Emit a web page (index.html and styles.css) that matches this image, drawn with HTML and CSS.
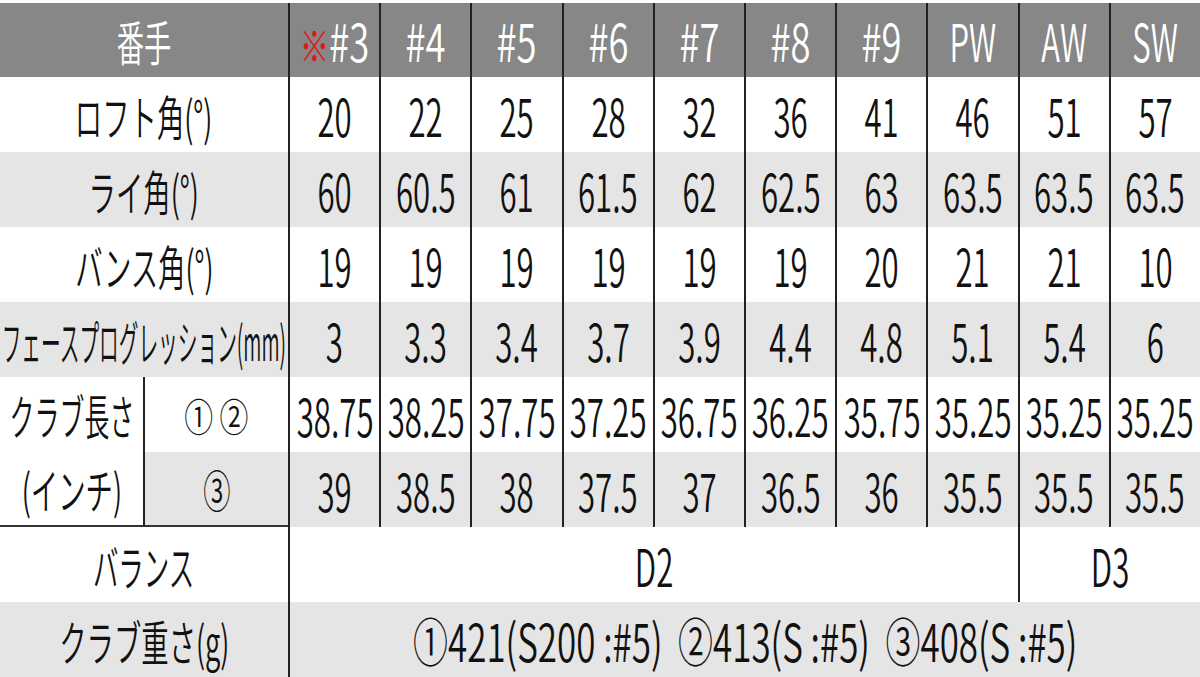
FILE: index.html
```html
<!DOCTYPE html>
<html lang="ja">
<head>
<meta charset="utf-8">
<title>スペック</title>
<link rel="stylesheet" href="styles.css">
</head>
<body>
<div class="spec">
  <div class="c h span2"><span class="t jp">番手</span></div>
  <div class="c h d"><span class="t hn"><span class="mark">※</span>#3</span></div>
  <div class="c h d"><span class="t hn">#4</span></div>
  <div class="c h d"><span class="t hn">#5</span></div>
  <div class="c h d"><span class="t hn">#6</span></div>
  <div class="c h d"><span class="t hn">#7</span></div>
  <div class="c h d"><span class="t hn">#8</span></div>
  <div class="c h d"><span class="t hn">#9</span></div>
  <div class="c h d"><span class="t">PW</span></div>
  <div class="c h d"><span class="t">AW</span></div>
  <div class="c h d"><span class="t">SW</span></div>

  <div class="c w span2"><span class="t jp">ロフト角(°)</span></div>
  <div class="c w d"><span class="t">20</span></div>
  <div class="c w d"><span class="t">22</span></div>
  <div class="c w d"><span class="t">25</span></div>
  <div class="c w d"><span class="t">28</span></div>
  <div class="c w d"><span class="t">32</span></div>
  <div class="c w d"><span class="t">36</span></div>
  <div class="c w d"><span class="t">41</span></div>
  <div class="c w d"><span class="t">46</span></div>
  <div class="c w d"><span class="t">51</span></div>
  <div class="c w d"><span class="t">57</span></div>

  <div class="c g span2"><span class="t jp">ライ角(°)</span></div>
  <div class="c g d"><span class="t">60</span></div>
  <div class="c g d"><span class="t">60.5</span></div>
  <div class="c g d"><span class="t">61</span></div>
  <div class="c g d"><span class="t">61.5</span></div>
  <div class="c g d"><span class="t">62</span></div>
  <div class="c g d"><span class="t">62.5</span></div>
  <div class="c g d"><span class="t">63</span></div>
  <div class="c g d"><span class="t">63.5</span></div>
  <div class="c g d"><span class="t">63.5</span></div>
  <div class="c g d"><span class="t">63.5</span></div>

  <div class="c w span2"><span class="t jp">バンス角(°)</span></div>
  <div class="c w d"><span class="t">19</span></div>
  <div class="c w d"><span class="t">19</span></div>
  <div class="c w d"><span class="t">19</span></div>
  <div class="c w d"><span class="t">19</span></div>
  <div class="c w d"><span class="t">19</span></div>
  <div class="c w d"><span class="t">19</span></div>
  <div class="c w d"><span class="t">20</span></div>
  <div class="c w d"><span class="t">21</span></div>
  <div class="c w d"><span class="t">21</span></div>
  <div class="c w d"><span class="t">10</span></div>

  <div class="c g span2"><span class="t jp narrow">フェースプログレッション(mm)</span></div>
  <div class="c g d"><span class="t">3</span></div>
  <div class="c g d"><span class="t">3.3</span></div>
  <div class="c g d"><span class="t">3.4</span></div>
  <div class="c g d"><span class="t">3.7</span></div>
  <div class="c g d"><span class="t">3.9</span></div>
  <div class="c g d"><span class="t">4.4</span></div>
  <div class="c g d"><span class="t">4.8</span></div>
  <div class="c g d"><span class="t">5.1</span></div>
  <div class="c g d"><span class="t">5.4</span></div>
  <div class="c g d"><span class="t">6</span></div>

  <div class="club w">
    <div class="club-line"><span class="t jp club1">クラブ長さ</span></div>
    <div class="club-line"><span class="t jp">(インチ)</span></div>
  </div>
  <div class="c w d"><span class="t circ">① ②</span></div>
  <div class="c w d"><span class="t">38.75</span></div>
  <div class="c w d"><span class="t">38.25</span></div>
  <div class="c w d"><span class="t">37.75</span></div>
  <div class="c w d"><span class="t">37.25</span></div>
  <div class="c w d"><span class="t">36.75</span></div>
  <div class="c w d"><span class="t">36.25</span></div>
  <div class="c w d"><span class="t">35.75</span></div>
  <div class="c w d"><span class="t">35.25</span></div>
  <div class="c w d"><span class="t">35.25</span></div>
  <div class="c w d"><span class="t">35.25</span></div>

  <div class="c g d endl"><span class="t circ3">③</span></div>
  <div class="c g d"><span class="t">39</span></div>
  <div class="c g d"><span class="t">38.5</span></div>
  <div class="c g d"><span class="t">38</span></div>
  <div class="c g d"><span class="t">37.5</span></div>
  <div class="c g d"><span class="t">37</span></div>
  <div class="c g d"><span class="t">36.5</span></div>
  <div class="c g d"><span class="t">36</span></div>
  <div class="c g d"><span class="t">35.5</span></div>
  <div class="c g d"><span class="t">35.5</span></div>
  <div class="c g d"><span class="t">35.5</span></div>

  <div class="c w span2"><span class="t jp bal">バランス</span></div>
  <div class="c w d span8"><span class="t">D2</span></div>
  <div class="c w d span2b"><span class="t">D3</span></div>

  <div class="c g span2"><span class="t jp">クラブ重さ(g)</span></div>
  <div class="c g d span10"><span class="t weight">①421(S200 :#5)&nbsp; ②413(S :#5)&nbsp; ③408(S :#5)</span></div>
</div>
</body>
</html>
```

FILE: styles.css
```css
html, body {
  margin: 0;
  padding: 0;
  background: #ffffff;
}

body {
  padding-top: 3px;
  font-family: "Noto Sans CJK JP", "Noto Sans", sans-serif;
  font-weight: 350;
  color: #111111;
}

.spec {
  display: grid;
  grid-template-columns: 143px 145px repeat(10, 91.2px);
  grid-template-rows: 74px repeat(8, 75px);
  width: 1200px;
  overflow: hidden;
}

.c {
  display: flex;
  align-items: center;
  justify-content: center;
  min-width: 0;
  overflow: visible;
}

.h { background: #878787; color: #ffffff; }
.w { background: #ffffff; }
.g { background: #e5e5e5; }

.d { border-left: 2px solid #222222; }

.span2 { grid-column: span 2; }
.span8 { grid-column: span 8; }
.span2b { grid-column: span 2; }
.span10 { grid-column: span 10; }

.t {
  display: inline-block;
  white-space: nowrap;
  font-size: 52px;
  line-height: 1;
  transform: scaleX(0.6);
}

.t.hn { transform: scaleX(0.7); }

.t.jp {
  font-size: 48px;
  transform: scaleX(0.57);
}

.t.jp.narrow { transform: scaleX(0.41); }
.t.jp.club1 { transform: scaleX(0.52); }
.t.jp.bal { transform: scaleX(0.53); }

.t.circ {
  font-size: 38px;
  transform: scaleX(0.76);
}

.t.circ3 {
  font-size: 44px;
  transform: scaleX(0.62);
}

.t.weight { transform: scaleX(0.672); }

.mark {
  color: #e0161b;
  font-size: 42px;
}

.club {
  grid-row: span 2;
  display: flex;
  flex-direction: column;
  border-bottom: 2px solid #333333;
}

.club-line {
  flex: 1;
  display: flex;
  align-items: center;
  justify-content: center;
}

.endl { border-bottom: 2px solid #333333; }
```
